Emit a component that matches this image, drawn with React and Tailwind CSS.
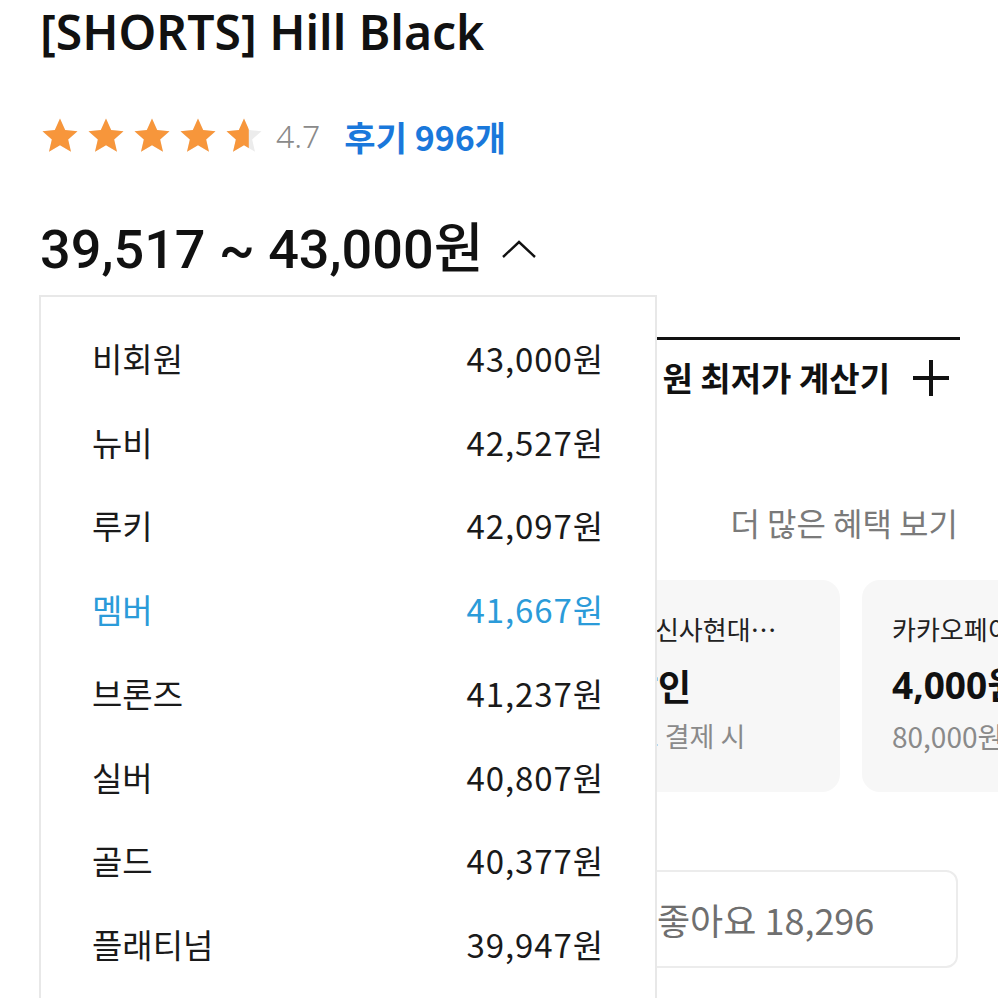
import React from "react";

const KR = { fontFamily: '"Noto Sans CJK KR", "Noto Sans", sans-serif' };

function Star({ fill = 1, id }) {
  const d = "M12 1.5l3.1 6.9 7.4.7-5.6 5 1.7 7.4L12 17.6l-6.6 3.9 1.7-7.4-5.6-5 7.4-.7z";
  return (
    <svg width="40" height="40" viewBox="0 0 24 24">
      <defs>
        <clipPath id={id}>
          <rect x="0" y="0" width={24 * fill} height="24" />
        </clipPath>
      </defs>
      <path d={d} fill="#ececec" />
      <path d={d} fill="#f7963b" clipPath={`url(#${id})`} />
    </svg>
  );
}

const tiers = [
  ["비회원", "43,000원"],
  ["뉴비", "42,527원"],
  ["루키", "42,097원"],
  ["멤버", "41,667원", true],
  ["브론즈", "41,237원"],
  ["실버", "40,807원"],
  ["골드", "40,377원"],
  ["플래티넘", "39,947원"],
];

export default function App() {
  return (
    <div
      className="relative w-[998px] h-[998px] overflow-hidden bg-white text-[#111]"
      style={KR}
    >
      <div className="pl-[40px] pr-[38px]">
        <h1
          className="pt-[2px] text-[48px] leading-[60px] font-semibold text-[#111]"
          style={{ fontFamily: '"Noto Sans", "Noto Sans CJK KR", sans-serif' }}
        >
          [SHORTS] Hill Black
        </h1>

        <div className="mt-[52px] flex items-center h-[44px]">
          <div className="flex gap-[6px]">
            <Star id="s1" />
            <Star id="s2" />
            <Star id="s3" />
            <Star id="s4" />
            <Star id="s5" fill={0.62} />
          </div>
          <span
            className="ml-[12px] text-[32px] text-[#8a8a8a] font-light"
            style={{ fontFamily: '"Noto Sans", sans-serif' }}
          >
            4.7
          </span>
          <span className="ml-[24px] text-[34px] font-bold text-[#1a78db]">후기 996개</span>
        </div>

        <div className="mt-[61px] flex items-center h-[60px]">
          <span
            className="text-[54px] font-medium text-[#111]"
            style={{ fontFamily: 'Roboto, "Noto Sans CJK KR", sans-serif' }}
          >
            39,517 ~ 43,000원
          </span>
          <svg className="ml-[18px] mt-[2px]" width="36" height="20" viewBox="0 0 36 20">
            <path d="M2 17 L18 2 L34 17" fill="none" stroke="#111" strokeWidth="2.4" />
          </svg>
        </div>

        <div className="mt-[58px] h-[3px] bg-[#111] w-[920px]" />

        <div className="mt-[16px] flex items-center justify-end w-[920px] h-[44px] pr-[10px] overflow-hidden">
          <span className="text-[33px] font-bold text-[#111] whitespace-nowrap">원 최저가 계산기</span>
          <svg className="ml-[22px] shrink-0" width="38" height="38" viewBox="0 0 38 38">
            <path d="M19 1 V37 M1 19 H37" stroke="#111" strokeWidth="4" />
          </svg>
        </div>

        <div className="mt-[102px] flex justify-end w-[918px] h-[40px] items-center">
          <span className="text-[32px] text-[#7a7a7a]">더 많은 혜택 보기</span>
        </div>

        <div className="mt-[38px] flex gap-[22px] ml-[278px] w-[1000px]">
          <div className="w-[261px] h-[212px] shrink-0 rounded-[18px] bg-[#f7f7f7]" />
          <div className="w-[239px] h-[212px] shrink-0 rounded-[18px] bg-[#f7f7f7] pl-[30px] pt-[30px]">
            <div className="text-[26px] leading-[38px] text-[#222] whitespace-nowrap">무신사현대…</div>
            <div className="ml-[-6px] mt-[12px] text-[36px] leading-[50px] font-bold text-[#111] whitespace-nowrap">할인</div>
            <div className="ml-[-22px] mt-[6px] text-[27px] leading-[40px] text-[#8a8a8a] whitespace-nowrap">카드 결제 시</div>
          </div>
          <div className="w-[239px] h-[212px] shrink-0 rounded-[18px] bg-[#f7f7f7] pl-[30px] pt-[30px]">
            <div className="text-[26px] leading-[38px] text-[#222] whitespace-nowrap">카카오페이</div>
            <div
              className="mt-[12px] text-[37px] leading-[50px] font-bold text-[#111] whitespace-nowrap"
              style={{ fontFamily: '"Noto Sans", "Noto Sans CJK KR", sans-serif' }}
            >
              4,000원
            </div>
            <div className="mt-[6px] text-[28px] leading-[40px] text-[#8a8a8a] whitespace-nowrap">80,000원 이상</div>
          </div>
        </div>

        <div className="mt-[78px] ml-[460px] w-[458px] h-[98px] rounded-[12px] border-2 border-[#ececec] flex items-center pl-[155px]">
          <span className="text-[36px] text-[#6f6f6f] whitespace-nowrap">좋아요 18,296</span>
        </div>
      </div>

      <div className="absolute left-[39px] top-[295px] w-[618px] h-[760px] bg-white border-2 border-[#e8e8e8] pt-[20px]">
        {tiers.map(([name, price, active]) => (
          <div
            key={name}
            className={`h-[83.7px] flex items-center justify-between pl-[51px] pr-[51px] text-[33px] ${
              active ? "text-[#2b9bd9]" : "text-[#1a1a1a]"
            }`}
          >
            <span>{name}</span>
            <span className="tracking-[0.9px]">{price}</span>
          </div>
        ))}
      </div>
    </div>
  );
}
